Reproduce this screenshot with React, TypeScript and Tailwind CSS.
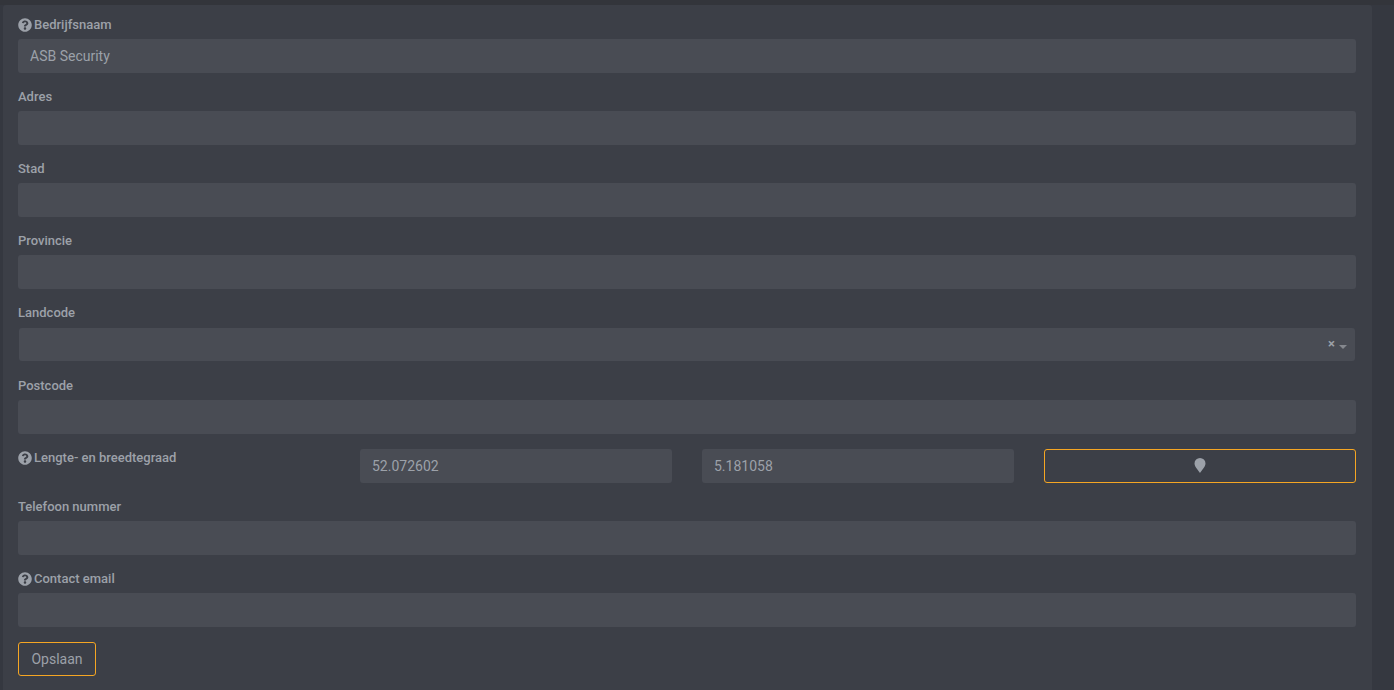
import React from "react";
import { FaQuestionCircle } from "react-icons/fa";

function Label({ text, help }: { text: string; help?: boolean }) {
  return (
    <div className="flex h-[22px] items-center gap-[2px] text-[13px] font-medium leading-5 text-[#9ca1a9]">
      {help && <FaQuestionCircle className="h-[14px] w-[14px] shrink-0 text-[#9ca1a9]" />}
      <span>{text}</span>
    </div>
  );
}

function Input({ value, className = "" }: { value?: string; className?: string }) {
  return (
    <input
      readOnly
      value={value ?? ""}
      className={`block h-[34px] w-full rounded-[3px] bg-[#494c54] px-3 text-sm leading-[34px] text-[#9ca1a9] outline-none ${className}`}
    />
  );
}

function Field({ label, help, value }: { label: string; help?: boolean; value?: string }) {
  return (
    <div className="mb-[13px]">
      <div className="mb-[3px]">
        <Label text={label} help={help} />
      </div>
      <Input value={value} />
    </div>
  );
}

export default function App() {
  return (
    <div className="h-[690px] w-[1394px] overflow-hidden bg-[#353840] font-['Roboto',sans-serif]">
      <div className="h-[5px] bg-[#33353b]" />
      <div className="ml-[3px] h-[685px] w-[1369px] rounded-t-[3px] bg-[#3c3f47] pl-[15px] pr-4 pt-[9px]">
        <Field label="Bedrijfsnaam" help value="ASB Security" />
        <Field label="Adres" />
        <Field label="Stad" />
        <Field label="Provincie" />

        <div className="mb-[14px]">
          <div className="mb-[4px]">
            <Label text="Landcode" />
          </div>
          <div className="mx-px flex h-[33px] items-center justify-end gap-[4px] rounded-[3px] bg-[#494c54] pr-[8px]">
            <span className="mb-[2px] text-[13px] font-bold leading-none text-[#9ca1a9]">×</span>
            <span className="mt-[4px] h-0 w-0 border-x-[4px] border-t-[4px] border-x-transparent border-t-[#85888e]" />
          </div>
        </div>

        <Field label="Postcode" />

        <div className="grid h-[49px] grid-cols-4 gap-x-[30px]">
          <Label text="Lengte- en breedtegraad" help />
          <Input value="52.072602" className="mt-[2px]" />
          <Input value="5.181058" className="mt-[2px]" />
          <button className="mt-[2px] flex h-[34px] items-center justify-center rounded-[3px] border border-[#f5a623] pb-[2px]">
            <svg width="12" height="15" viewBox="0 0 12 15" className="text-[#9ca1a9]">
              <path d="M6 15C5 13 .5 9 .5 5.500a5.500 5.500 0 0 1 11 0C11.500 9 7 13 6 15Z" fill="currentColor" />
            </svg>
          </button>
        </div>

        <Field label="Telefoon nummer" />
        <Field label="Contact email" help />

        <button className="mt-[2px] h-[34px] w-[78px] rounded-[3px] border border-[#f5a623] text-sm text-[#9ca1a9]">
          Opslaan
        </button>
      </div>
    </div>
  );
}
